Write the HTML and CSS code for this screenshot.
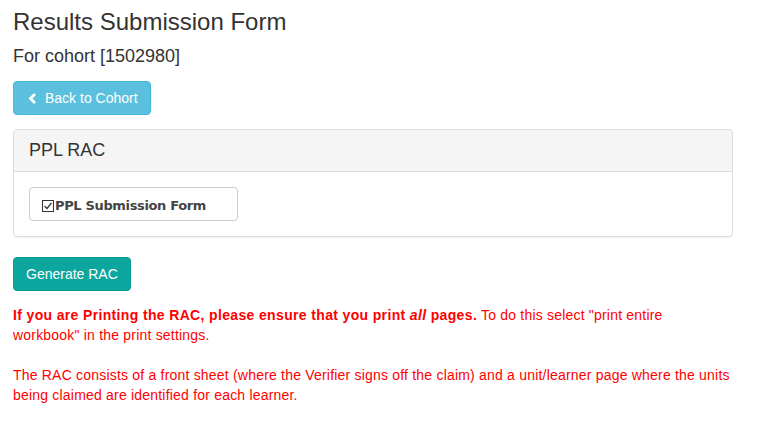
FILE: index.html
```html
<!DOCTYPE html>
<html lang="en">
<head>
  <meta charset="UTF-8">
  <meta name="viewport" content="width=device-width, initial-scale=1.0">
  <title>Results Submission Form</title>
  <link rel="stylesheet" href="styles.css">
</head>
<body>
  <div class="container">
    <h1 class="title">Results Submission Form</h1>
    <h4 class="subtitle">For cohort [1502980]</h4>
    <div class="actions">
      <a class="btn btn-info" href="#">
        <svg class="chevron" width="9" height="11" viewBox="0 0 9 11"><polyline points="7,1 2.5,5.5 7,10" fill="none" stroke="#fff" stroke-width="2.8"/></svg>
        Back to Cohort
      </a>
    </div>
    <div class="panel">
      <div class="panel-heading">
        <h3 class="panel-title">PPL RAC</h3>
      </div>
      <div class="panel-body">
        <label class="check-box">
          <svg class="tick" width="12" height="12" viewBox="0 0 12 12"><rect x="0.5" y="0.5" width="11" height="11" fill="#fff" stroke="#333"/><polyline points="2.5,6 5,8.5 9.5,3" fill="none" stroke="#333" stroke-width="1.2"/></svg>PPL Submission Form
        </label>
      </div>
    </div>
    <div class="actions">
      <button class="btn btn-generate" type="button">Generate RAC</button>
    </div>
    <p class="notice"><strong>If you are Printing the RAC, please ensure that you print <em>all</em> pages.</strong> To do this select "print entire workbook" in the print settings.</p>
    <p class="notice">The RAC consists of a front sheet (where the Verifier signs off the claim) and a unit/learner page where the units being claimed are identified for each learner.</p>
  </div>
</body>
</html>
```

FILE: styles.css
```css
* { margin: 0; padding: 0; box-sizing: border-box; }
body {
  font-family: "Liberation Sans", Arial, sans-serif;
  font-size: 14px;
  line-height: 20px;
  color: #333;
  background: #fff;
}
.container {
  width: 720px;
  margin-left: 13px;
  padding-top: 9px;
}
.title {
  font-size: 24px;
  font-weight: normal;
  line-height: 26px;
}
.subtitle {
  font-size: 18px;
  font-weight: normal;
  line-height: 20px;
  margin-top: 11px;
}
.actions { display: flex; }
.btn {
  display: inline-flex;
  align-items: center;
  padding: 6px 12px;
  font-family: inherit;
  font-size: 14px;
  line-height: 20px;
  color: #fff;
  border: 1px solid transparent;
  border-radius: 4px;
  text-decoration: none;
  cursor: pointer;
}
.btn-info {
  margin-top: 15px;
  background: #5bc0de;
  border-color: #46b8da;
  gap: 8px;
}
.chevron { display: block; margin-left: 2px; }
.btn-generate {
  margin-top: 20px;
  background: #0ca69f;
  border-color: #0a9a93;
}
.panel {
  margin-top: 14px;
  border: 1px solid #ddd;
  border-radius: 4px;
  box-shadow: 0 1px 1px rgba(0,0,0,0.05);
}
.panel-heading {
  background: #f5f5f5;
  border-bottom: 1px solid #ddd;
  padding: 10px 15px 11px;
  border-radius: 3px 3px 0 0;
}
.panel-title {
  font-size: 18px;
  font-weight: normal;
  line-height: 20px;
}
.panel-body { padding: 15px; }
.check-box {
  display: flex;
  align-items: center;
  width: 209px;
  height: 34px;
  padding: 3px 12px 0;
  border: 1px solid #ccc;
  border-radius: 4px;
  font-family: "DejaVu Sans", Verdana, sans-serif;
  font-size: 13px;
  font-weight: bold;
  letter-spacing: -0.35px;
  color: #444;
}
.tick { display: block; flex-shrink: 0; margin-right: 1px; }
.notice {
  color: #f00;
  margin-top: 14px;
  letter-spacing: 0.2px;
}
.notice strong { letter-spacing: 0.35px; }
.notice + .notice { margin-top: 20px; }
```
